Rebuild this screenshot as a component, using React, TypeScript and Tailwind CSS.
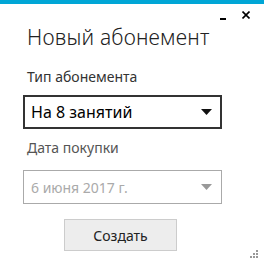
import React from 'react';

function Caret({ color }: { color: string }) {
  return (
    <svg width="11" height="6" viewBox="0 0 11 6" className="shrink-0">
      <path d="M0 0 H11 L5.5 6 Z" fill={color} />
    </svg>
  );
}

function Grip() {
  return (
    <div className="grid grid-cols-3 gap-[1px] w-[8px]">
      <span />
      <span />
      <span className="h-[2px] w-[2px] bg-[#999]" />
      <span />
      <span className="h-[2px] w-[2px] bg-[#999]" />
      <span className="h-[2px] w-[2px] bg-[#999]" />
      <span className="h-[2px] w-[2px] bg-[#999]" />
      <span className="h-[2px] w-[2px] bg-[#999]" />
      <span className="h-[2px] w-[2px] bg-[#999]" />
    </div>
  );
}

export default function App() {
  return (
    <div className="relative h-[266px] w-[264px] overflow-hidden bg-white font-['Noto_Sans',sans-serif]">
      <div className="h-[4px] bg-[#00a6d6]" />
      <div className="flex h-[20px] items-start justify-end gap-[16px] pr-[14px] pt-[5px] text-[#111]">
        <span className="mt-[9px] h-[2px] w-[6px] bg-black" />
        <svg width="8" height="8" viewBox="0 0 8 8" className="mt-[2px]">
          <path d="M0.5 0.5 L7.5 7.5 M7.5 0.5 L0.5 7.5" stroke="#000" strokeWidth="1.6" />
        </svg>
      </div>

      <div className="pl-[23px] pr-[42px]">
        <h1 className="pl-[4px] text-[21px] font-light leading-[26px] tracking-[0.2px] text-[#222]">
          Новый абонемент
        </h1>

        <div className="mt-[18px] pl-[4px] text-[14px] leading-[18px] text-[#333]">Тип абонемента</div>
        <div className="mt-[9px] flex h-[34px] items-center justify-between border-2 border-[#333] pl-[6px] pr-[8px]">
          <span className="text-[16px] text-black">На 8 занятий</span>
          <Caret color="#111" />
        </div>

        <div className="mt-[10px] pl-[4px] text-[14px] leading-[18px] text-[#555]">Дата покупки</div>
        <div className="mt-[13px] flex h-[34px] items-center justify-between border border-[#aaa] pl-[7px] pr-[9px]">
          <span className="text-[14px] text-[#aaa]">6 июня 2017 г.</span>
          <Caret color="#999" />
        </div>

        <div className="mt-[15px] flex justify-center pr-[4px]">
          <button className="h-[32px] w-[113px] border border-[#ccc] bg-[#ededed] text-[14px] text-[#222]">
            Создать
          </button>
        </div>
      </div>

      <div className="absolute bottom-[8px] right-[6px]">
        <Grip />
      </div>
    </div>
  );
}
